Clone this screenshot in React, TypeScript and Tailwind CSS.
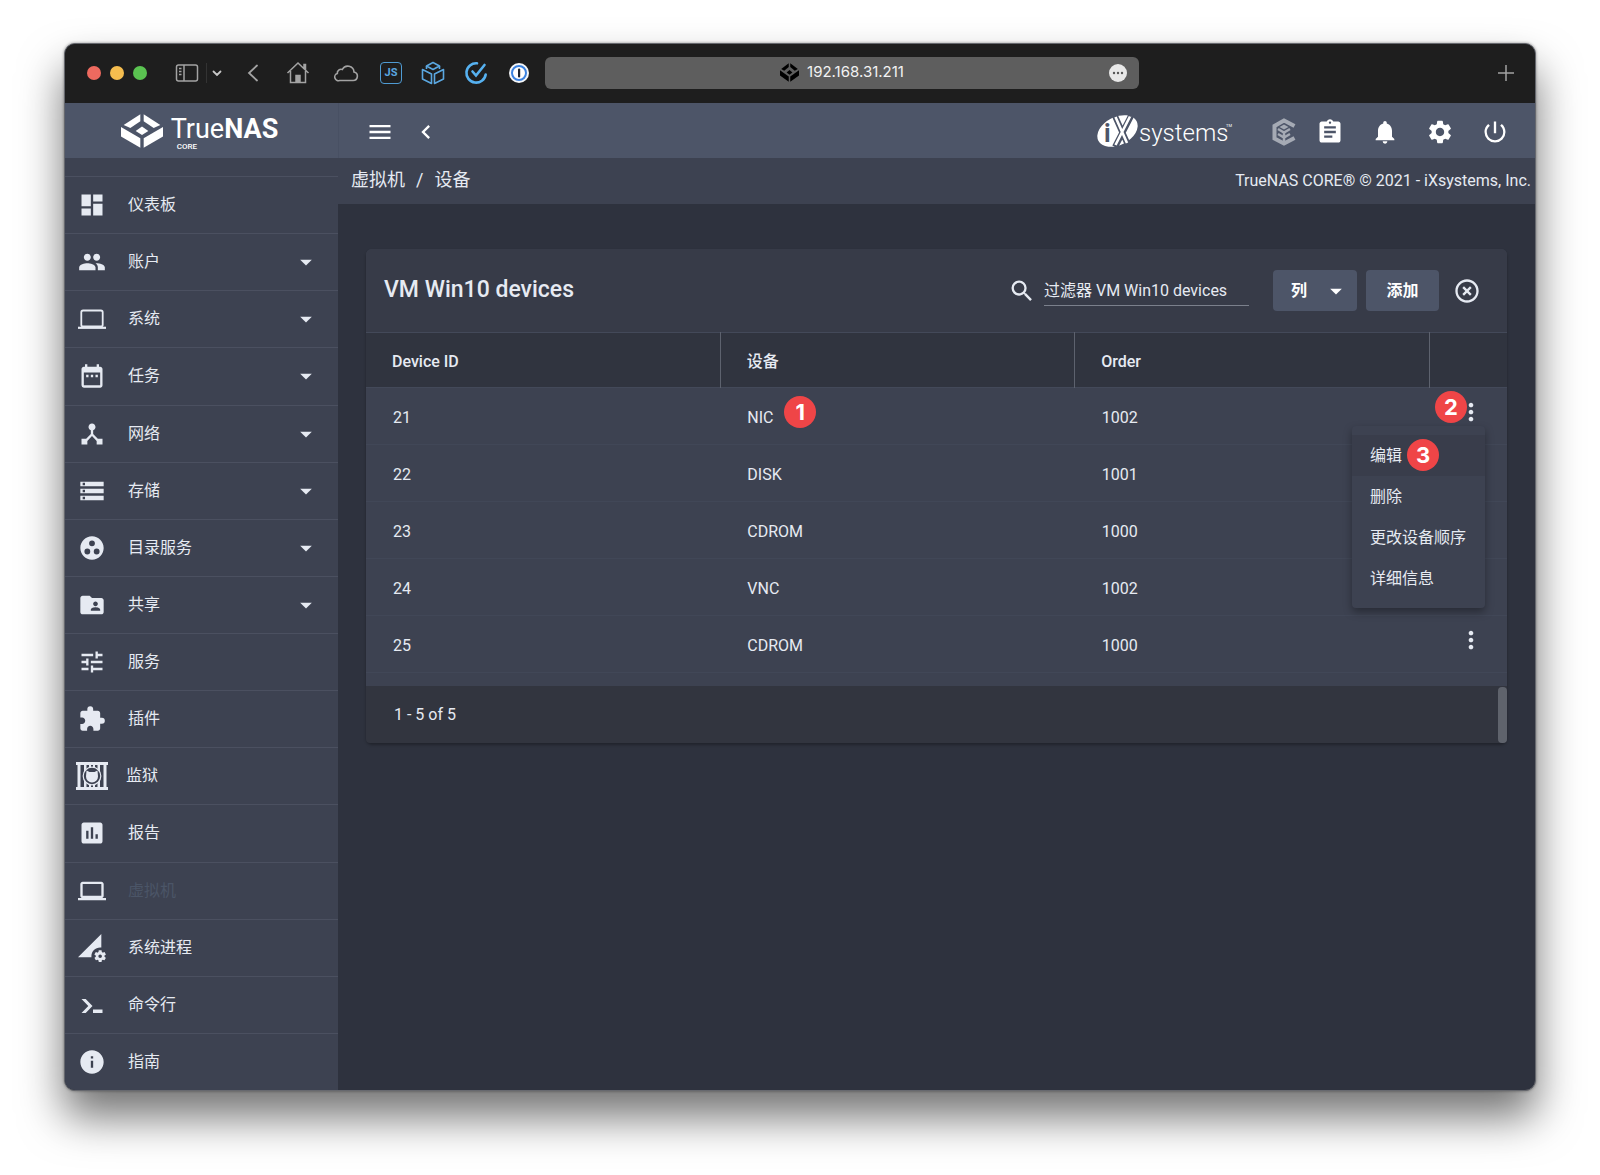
import { ReactNode } from "react";
import { IconType } from "react-icons";
import {
  MdArrowDropDown,
  MdAssessment,
  MdAssignment,
  MdChevronLeft,
  MdDashboard,
  MdDateRange,
  MdDeviceHub,
  MdExtension,
  MdFolderShared,
  MdGroupWork,
  MdHighlightOff,
  MdInfo,
  MdLaptop,
  MdMenu,
  MdMoreVert,
  MdNotifications,
  MdPeople,
  MdPermDataSetting,
  MdPowerSettingsNew,
  MdSearch,
  MdSettings,
  MdStorage,
  MdTune,
} from "react-icons/md";

type NavItem = {
  label: string;
  icon: IconType | (() => ReactNode);
  expandable?: boolean;
  active?: boolean;
};

type Device = { id: number; name: string; order: number };

const devices: Device[] = [
  { id: 21, name: "NIC", order: 1002 },
  { id: 22, name: "DISK", order: 1001 },
  { id: 23, name: "CDROM", order: 1000 },
  { id: 24, name: "VNC", order: 1002 },
  { id: 25, name: "CDROM", order: 1000 },
];

const navItems: NavItem[] = [
  { label: "仪表板", icon: MdDashboard },
  { label: "账户", icon: MdPeople, expandable: true },
  { label: "系统", icon: LaptopThinIcon, expandable: true },
  { label: "任务", icon: MdDateRange, expandable: true },
  { label: "网络", icon: MdDeviceHub, expandable: true },
  { label: "存储", icon: MdStorage, expandable: true },
  { label: "目录服务", icon: MdGroupWork, expandable: true },
  { label: "共享", icon: MdFolderShared, expandable: true },
  { label: "服务", icon: MdTune },
  { label: "插件", icon: MdExtension },
  { label: "监狱", icon: JailIcon },
  { label: "报告", icon: MdAssessment },
  { label: "虚拟机", icon: MdLaptop, active: true },
  { label: "系统进程", icon: MdPermDataSetting },
  { label: "命令行", icon: ShellIcon },
  { label: "指南", icon: MdInfo },
];

const rowActions = ["编辑", "删除", "更改设备顺序", "详细信息"];

function LaptopThinIcon() {
  return (
    <svg viewBox="0 0 28 28" className="size-7 shrink-0" fill="none" stroke="currentColor" strokeWidth="1.800">
      <rect x="3.300" y="5.500" width="21.400" height="16" rx="1.800" />
      <path d="M0 22.800h28" strokeWidth="2.200" />
    </svg>
  );
}

function JailIcon() {
  return (
    <svg viewBox="0 0 32 28" className="h-7 w-8 shrink-0">
      <g fill="currentColor">
        <path d="M0 0h32v3H0zM0 25h32v3H0z" />
        <path d="M1.500 3h3v22h-3zM27.500 3h3v22h-3zM8 3h2.500v22H8zM21.500 3H24v22h-2.500zM13 3h2v3h-2zM17 3h2v3h-2zM13 22h2v3h-2zM17 22h2v3h-2z" />
      </g>
      <circle cx="16" cy="14" r="8.800" fill="#3d4251" stroke="currentColor" strokeWidth="1.200" />
      <path d="M10.500 8.500l3 1.500h5l3-1.500.5 6a6 6 0 0 1-12 0z" fill="currentColor" />
    </svg>
  );
}

function ShellIcon() {
  return (
    <svg viewBox="0 0 28 28" className="size-7 shrink-0" fill="currentColor">
      <path d="M3.500 8h4.200l6.800 7-6.800 7H3.500l6.800-7zM15 18.500h9.500V22H15z" />
    </svg>
  );
}

// Open box mark, used in the header and as the favicon
function BoxMark({ className }: { className: string }) {
  return (
    <svg viewBox="0 0 126 100" className={className} fill="currentColor" preserveAspectRatio="none">
      <path d="M58 1v20L28 41 8 32z" />
      <path d="M68 1v20l30 20 20-9z" />
      <path d="M63 37l19 13-19 12-19-12z" />
      <path d="M0 38l58 33v28L0 66z" />
      <path d="M126 38L68 71v28l58-33z" />
    </svg>
  );
}

function TrueNasLogo() {
  return (
    <div className="flex items-center gap-2 pr-1 text-white">
      <BoxMark className="h-[34px] w-[42px]" />
      <div className="flex flex-col">
        <div className="pt-1 text-[27px] leading-7">
          <span>True</span>
          <span className="font-bold">NAS</span>
        </div>
        <span className="pl-1.5 text-[8px] leading-2 font-medium">CORE</span>
      </div>
    </div>
  );
}

function IxLogo() {
  return (
    <svg viewBox="0 0 136 36" className="h-9 w-[136px]" aria-label="iXsystems">
      <ellipse cx="20.500" cy="17" rx="21.500" ry="14" fill="#fff" transform="rotate(-27 20.500 17)" />
      <path d="M18 2l13 29M34 2L18 33" stroke="#4d5568" strokeWidth="6" />
      <path d="M18.500 3l11.500 26M33 2.500L18.500 31" stroke="#fff" strokeWidth="2.600" />
      <text x="7" y="28" fontSize="25" fontWeight="700" fill="#4d5568">i</text>
      <text x="42" y="27" fontSize="24" fontWeight="300" fill="#fff">systems</text>
      <text x="129" y="13" fontSize="4" fill="#fff">TM</text>
    </svg>
  );
}

function TrueCommandIcon() {
  return (
    <svg viewBox="0 0 24 28" className="h-7 w-6" fill="none" stroke="#a5aab4" strokeWidth="4">
      <path d="M22.500 8L12 2.500 2.500 8v12.500L12 25.500 22.500 20" />
      <path d="M6 11l6 3.500 6-3.500M6 16l6 3.500 6-3.500M12 13v10" strokeWidth="2.500" />
      <path d="M12 6.500l4.500 2.500L12 11.500 7.500 9z" fill="#a5aab4" stroke="none" />
    </svg>
  );
}

function Marker({ n, className }: { n: number; className: string }) {
  return (
    <span
      className={`absolute flex size-8 items-center justify-center rounded-full bg-[#ef4547] font-[Inter] text-[22px] leading-none font-bold text-white ${className}`}
    >
      {n}
    </span>
  );
}

function BrowserBar() {
  return (
    <div className="flex h-[59px] shrink-0 items-center bg-[#1e1e1e] pb-0.5 text-[#a3a3a3]">
      <div className="flex items-center gap-[9px] pl-[22px]">
        <span className="size-3.5 rounded-full bg-[#ee6a5f]" />
        <span className="size-3.5 rounded-full bg-[#f5bd4f]" />
        <span className="size-3.5 rounded-full bg-[#5ac351]" />
      </div>
      <button aria-label="Sidebar" className="ml-7">
        <svg viewBox="0 0 24 20" className="h-5 w-6" fill="none" stroke="currentColor" strokeWidth="1.500">
          <rect x="1.500" y="2" width="21" height="16" rx="2" />
          <path d="M9 2v16M4 5.500h2.500M4 8.500h2.500M4 11.500h2.500" />
        </svg>
      </button>
      <span className="ml-[7px] h-5 w-px bg-[#333]" />
      <button aria-label="Tab groups" className="ml-1">
        <svg viewBox="0 0 12 12" className="size-3" fill="none" stroke="#c8c8c8" strokeWidth="1.800">
          <path d="M2.500 4.500L6 8l3.500-3.500" strokeLinecap="round" />
        </svg>
      </button>
      <button aria-label="Back" className="ml-[22px]">
        <svg viewBox="0 0 16 20" className="h-5 w-4" fill="none" stroke="currentColor" strokeWidth="1.800">
          <path d="M12 2.500L4 10l8 7.500" strokeLinecap="round" />
        </svg>
      </button>
      <button aria-label="Home" className="ml-[25px]">
        <svg viewBox="0 0 24 24" className="size-6" fill="none" stroke="currentColor" strokeWidth="1.500">
          <path d="M1.500 12L12 2l10.500 10M4.500 10v11.500h15V10M18 7.500V3.500h1.500V9" />
          <path d="M10 21v-6.500h4V21" fill="currentColor" />
        </svg>
      </button>
      <button aria-label="iCloud" className="ml-[23px]">
        <svg viewBox="0 0 26 20" className="h-5 w-[26px]" fill="none" stroke="currentColor" strokeWidth="1.600">
          <path d="M6.500 17.500h13.500a4.300 4.300 0 0 0 1-8.500 6.200 6.200 0 0 0-11.700-2.500 3.800 3.800 0 0 0-5 4 3.600 3.600 0 0 0 2.200 7z" />
        </svg>
      </button>
      <button
        aria-label="JavaScript"
        className="ml-[21px] flex size-[22px] items-center justify-center rounded border border-[#4f9bd3] text-[11px] leading-none font-bold text-[#5aa7e0]"
      >
        JS
      </button>
      <button aria-label="Packages" className="ml-[19px] text-[#5aa7e0]">
        <svg viewBox="0 0 24 24" className="size-6" fill="none" stroke="currentColor" strokeWidth="1.600" strokeLinejoin="round">
          <path d="M12 1.500l6.500 3.500L12 8.500 5.500 5z" />
          <path d="M12 1.500v0M5.500 5v3M18.500 5v3" />
          <path d="M1.500 8.500L10.500 13v9.500l-9-4.500z" />
          <path d="M22.500 8.500L13.500 13v9.500l9-4.500z" />
        </svg>
      </button>
      <button aria-label="Tasks" className="ml-[19px] text-[#56b1f0]">
        <svg viewBox="0 0 24 24" className="size-6" fill="none" stroke="currentColor" strokeWidth="2.600" strokeLinecap="round">
          <path d="M13 2.300A9.700 9.700 0 1 0 21.700 13.500" />
          <path d="M8.500 10.500l3.500 4L20.500 4" />
        </svg>
      </button>
      <button aria-label="Passwords" className="ml-[21px]">
        <svg viewBox="0 0 20 20" className="size-5">
          <circle cx="10" cy="10" r="10" fill="#f4f6f8" />
          <circle cx="10" cy="10" r="7" fill="#fff" stroke="#3b82e0" strokeWidth="2" />
          <rect x="9" y="5.500" width="2.200" height="9" rx="1" fill="#1e2530" />
        </svg>
      </button>
      <div className="ml-4 flex h-8 w-[594px] items-center rounded-md bg-[#5e5e5e] pl-[30px]">
        <span className="flex flex-1 items-center justify-center gap-2 font-[Inter] text-[15px] text-[#f2f2f2]">
          <BoxMark className="size-[19px] text-black" />
          192.168.31.211
        </span>
        <button aria-label="Page menu" className="mr-3">
          <svg viewBox="0 0 18 18" className="size-[18px]">
            <circle cx="9" cy="9" r="9" fill="#e8e8e8" />
            <circle cx="5" cy="9" r="1.200" fill="#555" />
            <circle cx="9" cy="9" r="1.200" fill="#555" />
            <circle cx="13" cy="9" r="1.200" fill="#555" />
          </svg>
        </button>
      </div>
      <button aria-label="New tab" className="mr-[21px] ml-auto">
        <svg viewBox="0 0 16 16" className="size-4" stroke="currentColor" strokeWidth="1.500">
          <path d="M8 0v16M0 8h16" />
        </svg>
      </button>
    </div>
  );
}

function Sidebar() {
  return (
    <nav className="mt-[18px] flex flex-1 flex-col">
      {navItems.map(({ label, icon: Icon, expandable, active }) => (
        <a
          key={label}
          href="#"
          className={`flex flex-1 items-center border-t border-[#4b5060] pr-[18px] ${
            Icon === JailIcon ? "gap-[18px] pl-[11px]" : "gap-[22px] pl-[13px]"
          }`}
        >
          <Icon className="size-7 shrink-0" />
          <span className={active ? "text-[#4b5567]" : ""}>{label}</span>
          {expandable && <MdArrowDropDown className="ml-auto size-7" />}
        </a>
      ))}
    </nav>
  );
}

function DeviceTable() {
  return (
    <table className="w-full table-fixed border-collapse text-left">
      <thead>
        <tr className="h-[55px] border-y border-[#434959] bg-[#30343f]">
          <th className="border-r border-[#5d626e] pt-1 pl-[26px] font-medium">Device ID</th>
          <th className="border-r border-[#5d626e] pt-1 pl-[26px] font-medium">设备</th>
          <th className="border-r border-[#5d626e] pt-1 pl-[26px] font-medium">Order</th>
          <th className="w-[78px]" />
        </tr>
      </thead>
      <tbody>
        {devices.map((device, index) => (
          <tr key={device.id} className="h-[57px] border-b border-[#414757]">
            <td className="pt-1 pl-[27px]">{device.id}</td>
            <td className="relative pt-1 pl-[27px]">
              {device.name}
              {index === 0 && <Marker n={1} className="top-2 left-16" />}
            </td>
            <td className="pt-1 pl-[27px]">{device.order}</td>
            <td className="relative pb-2 pl-7">
              {(index === 0 || index === devices.length - 1) && (
                <button aria-label="操作" className="block">
                  <MdMoreVert className="size-7" />
                </button>
              )}
              {index === 0 && (
                <>
                  <Marker n={2} className="top-[3px] left-1.5" />
                  <RowMenu />
                </>
              )}
            </td>
          </tr>
        ))}
      </tbody>
    </table>
  );
}

function RowMenu() {
  return (
    <div
      role="menu"
      className="absolute top-[38px] right-[22px] z-10 w-[133px] rounded-sm bg-[#3d4251] py-[9px] shadow-[0_4px_8px_rgba(0,0,0,0.35)]"
    >
      {rowActions.map((action, index) => (
        <button
          key={action}
          role="menuitem"
          className={`relative flex h-[41px] w-full items-center pl-[18px] ${
            index === 0 ? "bg-[#393d4b]" : ""
          }`}
        >
          {action}
          {index === 0 && <Marker n={3} className="top-1 left-[55px]" />}
        </button>
      ))}
    </div>
  );
}

export default function App() {
  return (
    <div className="flex min-h-screen flex-col bg-white px-16 pt-[43px] pb-[84px] font-[Roboto,'Noto_Sans_CJK_SC',sans-serif] text-base text-[#e6eaf2]">
      <div className="flex flex-1 flex-col overflow-hidden rounded-[11px] border border-[#66686e] bg-[#2e323e] shadow-[0_0_3px_rgba(0,0,0,0.4),0_26px_44px_rgba(0,0,0,0.55)]">
        <BrowserBar />
        <div className="flex flex-1">
          <aside className="flex w-[273px] shrink-0 flex-col bg-[#3d4251]">
            <div className="flex h-[55px] items-center justify-center bg-[#4d5568]">
              <TrueNasLogo />
            </div>
            <Sidebar />
          </aside>

          <div className="flex min-w-0 flex-1 flex-col">
            <header className="flex h-[55px] items-center border-l border-[#485063] bg-[#4d5568] pt-0.5 pr-[26px] pl-[27px] text-white">
              <button aria-label="Menu">
                <MdMenu className="size-7" />
              </button>
              <button aria-label="Collapse" className="ml-[18px]">
                <MdChevronLeft className="size-7" />
              </button>
              <div className="ml-auto flex items-center">
                <IxLogo />
                <button aria-label="TrueCommand" className="mr-5 ml-[39px]">
                  <TrueCommandIcon />
                </button>
                <div className="flex gap-[27px]">
                  <button aria-label="Tasks">
                    <MdAssignment className="size-7" />
                  </button>
                  <button aria-label="Alerts">
                    <MdNotifications className="size-7" />
                  </button>
                  <button aria-label="Settings">
                    <MdSettings className="size-7" />
                  </button>
                  <button aria-label="Power">
                    <MdPowerSettingsNew className="size-7" />
                  </button>
                </div>
              </div>
            </header>

            <div className="flex h-[46px] items-center justify-between bg-[#3d4251] pr-1 pl-[13px]">
              <div className="flex items-center gap-[11px] pb-0.5 text-lg">
                <a href="#">虚拟机</a>
                <span>/</span>
                <a href="#">设备</a>
              </div>
              <span>TrueNAS CORE® © 2021 - iXsystems, Inc.</span>
            </div>

            <main className="px-7 pt-[45px]">
              <section className="rounded-md bg-[#3d4251] shadow-[0_2px_3px_rgba(0,0,0,0.3)]">
                <div className="flex h-[83px] items-center rounded-t-md bg-[#373b48] pr-[26px] pl-[18px]">
                  <h1 className="mr-auto text-[23px] font-medium">VM Win10 devices</h1>
                  <label htmlFor="filter" aria-label="过滤器">
                    <MdSearch className="size-7" />
                  </label>
                  <input
                    id="filter"
                    type="text"
                    placeholder="过滤器 VM Win10 devices"
                    className="mr-6 ml-2 h-[31px] w-[205px] border-b border-[#7b808c] bg-transparent outline-none placeholder:text-[#e6eaf2]"
                  />
                  <button className="mr-[9px] flex h-[41px] items-center gap-[15px] rounded-sm bg-[#4d5568] pr-[7px] pl-[18px] font-bold text-white">
                    列
                    <MdArrowDropDown className="size-7" />
                  </button>
                  <button className="mr-3.5 h-[41px] w-[73px] rounded-sm bg-[#4d5568] font-bold text-white">
                    添加
                  </button>
                  <button aria-label="关闭">
                    <MdHighlightOff className="size-7" />
                  </button>
                </div>
                <DeviceTable />
                <div className="mt-[13px] flex h-[57px] items-center justify-between rounded-b-sm bg-[#32353f] pl-7">
                  <span>1 - 5 of 5</span>
                  <span className="h-14 w-[9px] rounded-sm bg-[#5f636c]" />
                </div>
              </section>
            </main>
          </div>
        </div>
      </div>
    </div>
  );
}
